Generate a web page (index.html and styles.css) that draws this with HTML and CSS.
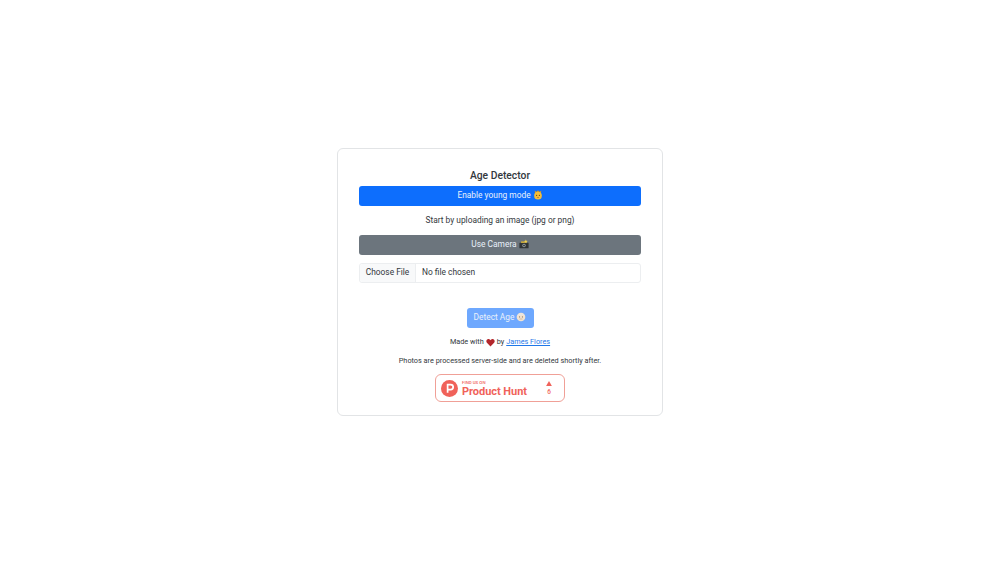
FILE: index.html
```html
<!DOCTYPE html>
<html lang="en">
<head>
<meta charset="utf-8">
<title>Age Detector</title>
<link rel="stylesheet" href="styles.css">
</head>
<body>
<main class="card">
  <h1 class="title">Age Detector</h1>
  <button class="btn btn-primary btn-block">Enable young mode
    <svg class="emoji" viewBox="0 0 12 12"><path d="M2.6 4 2 .8 4.4 2 6 .4 7.6 2 10 .8 9.4 4Z" fill="#d99a1e"/><circle cx="6" cy="6.8" r="4.6" fill="#f2bd3a"/><circle cx="4.3" cy="6.4" r=".8" fill="#6b4a12"/><circle cx="7.7" cy="6.4" r=".8" fill="#6b4a12"/><ellipse cx="6" cy="9" rx="1.3" ry=".7" fill="#c8742a"/></svg>
  </button>
  <p class="intro">Start by uploading an image (jpg or png)</p>
  <button class="btn btn-secondary btn-block">Use Camera
    <svg class="emoji" viewBox="0 0 12 12"><rect x=".5" y="4.4" width="11" height="6.8" rx=".5" fill="#2f3436"/><rect x="2.5" y="2.8" width="4.5" height="2" fill="#c9a93a"/><path d="M8.2.6 8.8 2.2 10.4 2.4 9.1 3.5 9.5 5 8.2 4.2 6.9 5 7.3 3.5 6 2.4 7.6 2.2Z" fill="#f3d34a"/><circle cx="6" cy="7.8" r="2.1" fill="#8d9598"/><circle cx="6" cy="7.8" r="1" fill="#23282a"/></svg>
  </button>
  <div class="file">
    <span class="file-btn">Choose File</span>
    <span class="file-name">No file chosen</span>
  </div>
  <button class="btn btn-detect">Detect Age
    <svg class="emoji" viewBox="0 0 12 12"><circle cx="6" cy="6" r="5.2" fill="#f2e3d0"/><path d="M1.6 4.4C2.8 1 9.2 1 10.4 4.4 8 3 4 3 1.6 4.4Z" fill="#e6e6e6"/><circle cx="4.3" cy="5.9" r=".7" fill="#8a7763"/><circle cx="7.7" cy="5.9" r=".7" fill="#8a7763"/><path d="M4.3 8.4H7.7" stroke="#b79c80" stroke-width=".7"/></svg>
  </button>
  <p class="small made">Made with
    <svg class="heart" viewBox="0 0 12 12"><path d="M6 11.4 1.2 6.4C-.4 4.4.6 1.2 3.2 1.2 4.5 1.2 5.4 2 6 3 6.6 2 7.5 1.2 8.8 1.2 11.4 1.2 12.4 4.4 10.8 6.4Z" fill="#b3262b"/></svg>
    by <a href="#" class="link">James Flores</a></p>
  <p class="small note">Photos are processed server-side and are deleted shortly after.</p>
  <a href="#" class="ph">
    <svg class="ph-logo" viewBox="0 0 18 18"><circle cx="9" cy="9" r="9" fill="#f0625a"/><path d="M7 13.5V4.8H10.2A2.7 2.7 0 0 1 10.2 10.2H7" fill="none" stroke="#fff" stroke-width="1.8"/></svg>
    <span class="ph-text"><span class="ph-find">FIND US ON</span><span class="ph-name">Product Hunt</span></span>
    <span class="ph-vote"><svg class="ph-arrow" viewBox="0 0 7 6"><path d="M3.5 0 7 6H0Z" fill="#f0625a"/></svg><span class="ph-count">6</span></span>
  </a>
</main>
</body>
</html>
```

FILE: styles.css
```css
* { box-sizing: border-box; }
html, body { margin: 0; height: 100%; }
body {
  display: flex;
  align-items: center;
  justify-content: center;
  min-height: 563px;
  background: #fff;
  font-family: Roboto, "Liberation Sans", sans-serif;
  font-size: 8.4px;
  color: #33383d;
}
.card {
  width: 326px;
  height: 268px;
  margin-top: 1px;
  padding: 20px 21px 0;
  border: 1px solid #e2e4e6;
  border-radius: 6px;
  display: flex;
  flex-direction: column;
  align-items: center;
}
.title { margin: 0 0 3px; font-size: 10.3px; line-height: 14px; font-weight: 500; }
.btn {
  display: flex;
  align-items: center;
  justify-content: center;
  gap: 2px;
  height: 20px;
  padding: 0 0 1px;
  border: 0;
  border-radius: 3px;
  color: #e9f1fb;
  font: inherit;
  line-height: 1;
}
.btn-block { width: 100%; flex: none; }
.btn-primary { background: #0d6efd; }
.btn-secondary { background: #6c757d; }
.btn-detect { width: 67px; margin-top: 25px; background: #6ea8fe; flex: none; }
.emoji { width: 10px; height: 10px; flex: none; margin-top: -1px; }
.intro { margin: 9px 0 9px; line-height: 11px; }
.file {
  display: flex;
  width: 100%;
  height: 20px;
  margin-top: 8px;
  border: 1px solid #eceef0;
  border-radius: 3px;
  flex: none;
  align-items: stretch;
}
.file-btn {
  width: 56px;
  display: flex;
  align-items: center;
  justify-content: center;
  padding-bottom: 2px;
  background: #f8f9fa;
  border-right: 1px solid #eceef0;
  border-radius: 3px 0 0 3px;
}
.file-name { display: flex; align-items: center; padding: 0 0 2px 6px; }
.small { margin: 0; font-size: 7.3px; line-height: 10px; }
.made { margin-top: 9px; display: flex; align-items: center; gap: 2px; }
.heart { width: 9px; height: 9px; flex: none; }
.link { color: #1f78e8; }
.note { margin-top: 9px; }
.ph {
  display: flex;
  align-items: center;
  width: 130px;
  height: 28px;
  margin-top: 8px;
  padding: 0 5px;
  border: 1px solid #f0a097;
  border-radius: 6px;
  background: #fff;
  color: #f0625a;
  text-decoration: none;
  flex: none;
}
.ph-logo { width: 17px; height: 17px; flex: none; }
.ph-text { display: flex; flex-direction: column; margin-left: 4px; width: 77px; padding-top: 1px; }
.ph-find { font-size: 4.4px; line-height: 6px; font-weight: 500; }
.ph-name { font-size: 11px; line-height: 11px; font-weight: 700; letter-spacing: -.05px; }
.ph-vote { display: flex; flex-direction: column; align-items: center; margin-left: 7px; padding-top: 1px; gap: 3px; }
.ph-arrow { width: 6px; height: 5px; }
.ph-count { font-size: 6.4px; line-height: 7px; font-weight: 500; }
```
